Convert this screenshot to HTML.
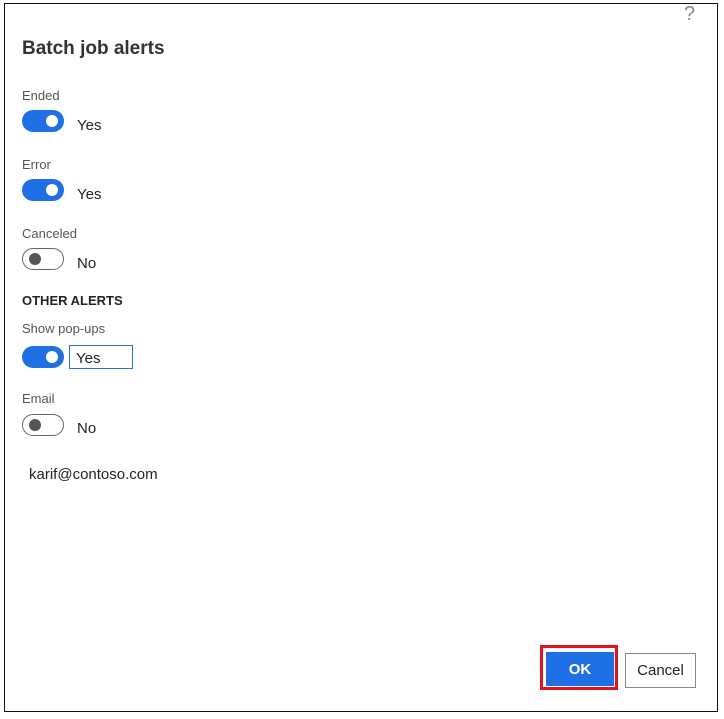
<!DOCTYPE html>
<html><head><style>
body{margin:0;width:724px;height:719px;background:#fff;font-family:"Liberation Sans",sans-serif;color:#222;position:relative;overflow:hidden}
.frame{position:absolute;left:4px;top:3px;width:714px;height:709px;border:1.5px solid #111;box-sizing:border-box}
.a{position:absolute;white-space:nowrap}
.lbl{font-size:13px;color:#555}
.val{font-size:15px;color:#222}
.tg{position:absolute;width:42px;height:22px;border-radius:11px;box-sizing:border-box}
.on{background:#1f6fe5}
.on::after{content:"";position:absolute;right:6px;top:5px;width:12px;height:12px;border-radius:50%;background:#fff}
.off{border:1.5px solid #666;background:#fff}
.off::after{content:"";position:absolute;left:6px;top:3.5px;width:12px;height:12px;border-radius:50%;background:#555}
</style></head><body>
<div class="frame"></div>
<div class="a" style="left:684px;top:3px;font-size:20px;color:#888">?</div>
<div class="a" style="left:22px;top:38px;font-size:19px;font-weight:bold;color:#333">Batch job alerts</div>

<div class="a lbl" style="left:22px;top:88px">Ended</div>
<div class="tg on" style="left:22px;top:110px"></div>
<div class="a val" style="left:77px;top:117px">Yes</div>

<div class="a lbl" style="left:22px;top:157px">Error</div>
<div class="tg on" style="left:22px;top:179px"></div>
<div class="a val" style="left:77px;top:186px">Yes</div>

<div class="a lbl" style="left:22px;top:226px">Canceled</div>
<div class="tg off" style="left:22px;top:248px"></div>
<div class="a val" style="left:77px;top:255px">No</div>

<div class="a" style="left:22px;top:293px;font-size:13px;font-weight:bold;color:#222">OTHER ALERTS</div>

<div class="a lbl" style="left:22px;top:321px">Show pop-ups</div>
<div class="tg on" style="left:22px;top:346px"></div>
<div class="a" style="left:69px;top:345px;width:64px;height:24px;border:1.5px solid #2a6fd6;box-sizing:border-box"></div>
<div class="a val" style="left:76px;top:350px">Yes</div>

<div class="a lbl" style="left:22px;top:391px">Email</div>
<div class="tg off" style="left:22px;top:414px"></div>
<div class="a val" style="left:77px;top:420px">No</div>

<div class="a" style="left:29px;top:466px;font-size:15px;color:#222">karif@contoso.com</div>

<div class="a" style="left:540px;top:645px;width:78px;height:45px;border:3px solid #e0131f;box-sizing:border-box"></div>
<div class="a" style="left:546px;top:652px;width:68px;height:34px;background:#1f6fe5;color:#fff;font-size:15px;font-weight:bold;text-align:center;line-height:36px">OK</div>
<div class="a" style="left:625px;top:653px;width:71px;height:35px;border:1.5px solid #888;box-sizing:border-box;font-size:15px;text-align:center;line-height:34px;color:#222">Cancel</div>
</body></html>
